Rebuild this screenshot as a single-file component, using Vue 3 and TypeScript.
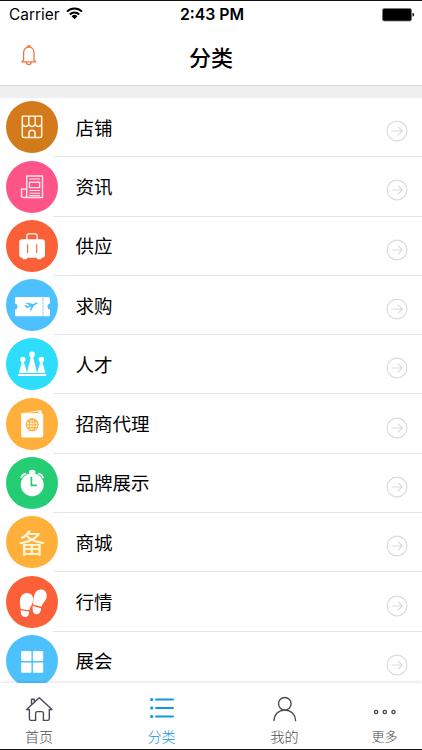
<script setup lang="ts">
interface Category {
  name: string
  icon: string
  color: string
}

const categories: Category[] = [
  { name: '店铺', icon: 'shop', color: '#d37b1a' },
  { name: '资讯', icon: 'news', color: '#ff5487' },
  { name: '供应', icon: 'case', color: '#fb6039' },
  { name: '求购', icon: 'ticket', color: '#4dc1fd' },
  { name: '人才', icon: 'crown', color: '#2edcfc' },
  { name: '招商代理', icon: 'passport', color: '#ffb03b' },
  { name: '品牌展示', icon: 'clock', color: '#24cc74' },
  { name: '商城', icon: 'spare', color: '#ffb03b' },
  { name: '行情', icon: 'feet', color: '#fb6039' },
  { name: '展会', icon: 'grid', color: '#4dc1fd' },
]

const tabs = [
  { name: '首页', icon: 'home', active: false },
  { name: '分类', icon: 'list', active: true },
  { name: '我的', icon: 'user', active: false },
  { name: '更多', icon: 'more', active: false },
]
</script>

<template>
  <div class="screen">
    <div class="status">
      <div class="carrier">
        <span>Carrier</span>
        <svg width="17" height="13" viewBox="0 0 17 13">
          <g fill="none" stroke="#000" stroke-width="2">
            <path d="M1 4.6a10.6 10.6 0 0 1 15 0" />
            <path d="M3.8 7.5a6.7 6.7 0 0 1 9.4 0" />
          </g>
          <path d="M5.6 9.3a4.1 4.1 0 0 1 5.8 0L8.5 12.3z" />
        </svg>
      </div>
      <div class="time">2:43 PM</div>
      <div class="battery">
        <svg width="33" height="14" viewBox="0 0 33 14">
          <rect x=".5" y=".5" width="29" height="12.5" rx="1.8" fill="#000" stroke="#777" stroke-width=".8" />
          <path d="M30.5 4.8q1.6.4 1.6 2t-1.6 2z" />
        </svg>
      </div>
    </div>

    <header class="navbar">
      <svg class="bell" width="16" height="21" viewBox="0 0 16 21" fill="none" stroke="#f4733f" stroke-width="1.3" stroke-linejoin="round">
        <path d="M2.6 15V7.6C2.6 4.4 4.8 2 7.8 2S13 4.4 13 7.6V15l1.7 1.900H.9z" />
        <path d="M6.5 2a1.3 1.3 0 0 1 2.6 0M5.2 17q.4 2.7 2.6 2.7t2.6-2.7" />
      </svg>
      <h1>分类</h1>
    </header>

    <main class="list">
      <div v-for="item in categories" :key="item.name" class="row">
        <div class="badge" :style="{ backgroundColor: item.color }">
          <span v-if="item.icon === 'spare'" class="glyph">备</span>
          <svg v-else width="52" height="52" viewBox="0 0 52 52">
            <g v-if="item.icon === 'shop'" fill="none" stroke="#fff4e4" stroke-width="1.5" stroke-linejoin="round">
              <path d="M16.3 15.3h19.4v8.2q-1.3 1.9-3.3 1.9T29.2 23.5q-1.2 1.9-3.2 1.9t-3.2-1.9q-1.2 1.9-3.2 1.9t-3.3-1.9zM22.8 15.3v8.2M29.2 15.3v8.2" />
              <path d="M16.3 24v10.500q0 2 2 2h15.400q2 0 2-2V24M23 36.5v-4.300a3 3 0 0 1 6 0v4.300" />
            </g>
            <g v-else-if="item.icon === 'news'" fill="none" stroke="#ffe4ec" stroke-width="1.4" stroke-linejoin="round">
              <path d="M20.7 36.5V15H36.5v21.5H17.5q-2 0-2-2V28h5.200M20.7 28v6.500q0 2-2 2" />
              <path d="M23.3 18h10.700M23.3 29.5h10.700M23.3 32.200h10.700M23.3 34.600h10.700" stroke-width="1.1" />
              <rect x="23.4" y="21.2" width="10.2" height="5.4" />
            </g>
            <g v-else-if="item.icon === 'case'">
              <path d="M20.9 20v-4.200q0-2 2-2h6.200q2 0 2 2V20" fill="none" stroke="#fff" stroke-width="1.3" />
              <rect x="13.2" y="19.2" width="25.8" height="18.6" rx="3" fill="#fff" />
              <path d="M16.5 37h4.500v1.200q0 1-1 1h-2.500q-1 0-1-1zM31 37h4.500v1.200q0 1-1 1H32q-1 0-1-1z" fill="#fff" />
              <path d="M21.6 24.200v8.800M30.7 24.200v8.800" stroke="#fb6039" stroke-width="1.1" />
            </g>
            <g v-else-if="item.icon === 'ticket'">
              <path d="M10.5 18h32q1.500 0 1.500 1.500v4.700a3.400 3.400 0 0 0 0 6.600v4.900q0 1.500-1.500 1.500h-32q-1.500 0-1.500-1.500v-4.900a3.400 3.400 0 0 0 0-6.600v-4.700Q9 18 10.500 18z" fill="#fff" />
              <path d="M37 19v18" stroke="#4dc1fd" stroke-width=".9" stroke-dasharray="1.5 .8" />
              <path d="M18.2 26.300l1.200-.4 2.200 1.200 2-.8-4.100-2.100 1.500-.6 6 1.400 2.800-1.300q1.500-.6 2 .1t-1.300 1.500l-2.600 1.200-2.700 5-1.300.5 1.100-4.600-3.500 1.500q-1 .1-1.600-.7z" fill="#4dc1fd" />
            </g>
            <g v-else-if="item.icon === 'crown'" fill="#fff">
              <circle cx="26" cy="16.4" r="2.9" />
              <circle cx="16.8" cy="21.4" r="2.7" />
              <circle cx="35.3" cy="21.4" r="2.7" />
              <path d="M25.1 18h1.800l4.200 17h-10.200zM16 23.500h1.700L21.200 35h-8.300zM34.5 23.500h1.700L39.500 35h-8.300zM12.2 36.100h28v1.800h-28z" />
            </g>
            <g v-else-if="item.icon === 'passport'">
              <path d="M15.6 15.300l18.500-3q1.400-.2 1.400 1.200v2h-18z" fill="#fff" />
              <path d="M19 15l13.500-1.500v1.700H19z" fill="#ffb03b" />
              <path d="M15.2 15.200h20q2 0 2 2v20.300q0 2-2 2H16.700q-1.500 0-1.500-1.500z" fill="#fff" />
              <g fill="none" stroke="#ffae36" stroke-width="1.2">
                <circle cx="26.2" cy="26.7" r="5.9" />
                <ellipse cx="26.2" cy="26.7" rx="2.9" ry="5.9" />
                <path d="M20.3 26.700h11.800M21.3 23.800h9.800M21.3 29.600h9.800M26.2 20.800v11.800" stroke-width=".9" />
              </g>
            </g>
            <g v-else-if="item.icon === 'clock'">
              <circle cx="26.2" cy="27.7" r="11.5" fill="#fff" />
              <path d="M23 14.800q.2-2 3.200-2t3.200 2v1.700H23z" fill="#fff" />
              <path d="M15.3 20.400q.7-2.600 4-3.800M33 16.600q3.300 1.200 4 3.800" fill="none" stroke="#fff" stroke-width="1.7" stroke-linecap="round" />
              <path d="M25.4 19.800v8.600h5.500" fill="none" stroke="#24cc74" stroke-width="1.7" />
            </g>
            <g v-else-if="item.icon === 'feet'" fill="#fff">
              <path d="M14.7 34.300l8.400 1.300q.2 5.600-4.500 5.500-4-.2-3.900-6.800zM14.6 32.900c-.3-3-1-5.200-.6-8.600.5-4.400 3.400-7.500 7.300-7.300 4.400.2 6.300 3.400 5.800 7.500-.5 3.700-2.900 6.200-3.800 9.700z" />
              <path d="M26.7 29.900l8.400 2.300q-.4 6.400-5 6-4.300-.5-3.400-8.300zM26.900 28.500c.5-3.200.3-5.100 1.200-8.400 1-4.200 3.600-7.100 7.500-6.600 4.300.6 5.700 4.100 4.900 8-.8 3.600-3.900 5.600-5.100 9.300z" />
            </g>
            <g v-else fill="#fff">
              <rect x="15.2" y="16" width="10.3" height="10.1" rx="1" />
              <rect x="26.9" y="16" width="10.3" height="10.1" rx="1" />
              <rect x="15.2" y="27.4" width="10.3" height="10.3" rx="1" />
              <rect x="26.9" y="27.4" width="10.3" height="10.3" rx="1" />
            </g>
          </svg>
        </div>
        <div class="cell">
          <span class="label">{{ item.name }}</span>
          <svg class="arrow" width="22" height="22" viewBox="0 0 22 22" fill="none" stroke="#dcdcdc" stroke-width="1.2">
            <circle cx="11" cy="11" r="9.9" />
            <path d="M5.5 11h10.500M11.8 6.600l4.500 4.400-4.500 4.400" />
          </svg>
        </div>
      </div>
    </main>

    <nav class="tabbar">
      <div v-for="tab in tabs" :key="tab.name" class="tab" :class="['tab-' + tab.icon, { active: tab.active }]">
        <svg width="30" height="28" viewBox="0 0 30 28" fill="none" stroke="currentColor" stroke-width="1.4" stroke-linecap="round" stroke-linejoin="round">
          <path v-if="tab.icon === 'home'" d="M2.5 14.500L15.3 2.800 28 14.500h-2.700v9.300q0 1.600-1.600 1.600h-4.300v-7.200q0-1.600-1.600-1.600h-4.600q-1.600 0-1.600 1.600v7.200H7q-1.600 0-1.600-1.600v-9.300zM7.500 9.500V4.300h2.800v2.500" />
          <g v-else-if="tab.icon === 'list'" stroke-width="2">
            <path d="M9 4.500h17M9 13h17M9 21.500h17" />
            <path d="M4.600 4.500h.2M4.600 13h.2M4.600 21.500h.2" stroke-width="3.2" />
          </g>
          <g v-else-if="tab.icon === 'user'">
            <circle cx="14.8" cy="8.8" r="6.3" />
            <path d="M4 25.500c.3-6 4.500-10.400 10.800-10.400S25.300 19.500 25.600 25.500" />
          </g>
          <g v-else>
            <circle cx="6.1" cy="17" r="1.6" />
            <circle cx="14.8" cy="17" r="1.6" />
            <circle cx="23.5" cy="17" r="1.6" />
          </g>
        </svg>
        <span>{{ tab.name }}</span>
      </div>
    </nav>
  </div>
</template>

<style>
body {
  margin: 0;
  overflow: hidden;
}
</style>

<style scoped>
.screen {
  box-sizing: border-box;
  width: 422px;
  height: 750px;
  display: flex;
  flex-direction: column;
  overflow: hidden;
  background: #fff;
  border-top: 1px solid #111;
  border-bottom: 1px solid #111;
  color: #000;
  font-family: "Noto Sans CJK SC", sans-serif;
}
.status {
  flex: none;
  height: 27px;
  display: grid;
  grid-template-columns: 1fr auto 1fr;
  align-items: center;
  padding: 0 7px 0 9px;
  font-family: Inter, sans-serif;
  font-size: 15.4px;
}
.carrier {
  display: flex;
  align-items: center;
  gap: 7px;
}
.carrier svg {
  margin-top: -2px;
}
.time {
  font-size: 15.8px;
  font-weight: 600;
}
.battery {
  display: flex;
  justify-content: flex-end;
}
.navbar {
  flex: none;
  box-sizing: border-box;
  height: 58px;
  display: grid;
  grid-template-columns: 1fr auto 1fr;
  align-items: center;
  padding: 0 21px 2px;
  border-bottom: 1px solid #d6d6d6;
}
h1 {
  margin: 0;
  font-size: 22px;
  line-height: 30px;
  font-weight: 500;
}
.list {
  flex: 1;
  min-height: 0;
  overflow: hidden;
  border-top: 12px solid #f0f0f0;
}
.row {
  height: 59.3px;
  display: flex;
}
.badge {
  flex: none;
  width: 52px;
  height: 52px;
  margin: 3.3px -5px 0 6px;
  border-radius: 50%;
  display: flex;
  align-items: center;
  justify-content: center;
}
.glyph {
  color: #fff7dc;
  font-size: 26.5px;
  line-height: 52px;
}
.cell {
  flex: 1;
  box-sizing: border-box;
  display: flex;
  justify-content: space-between;
  align-items: center;
  padding: 0 14px 0 22.5px;
  border-bottom: 1px solid #e4e4e6;
}
.label {
  margin-bottom: 1px;
  font-size: 18.5px;
  line-height: 28px;
}
.arrow {
  margin-top: 8px;
}
.tabbar {
  flex: none;
  height: 66px;
  display: grid;
  grid-template-columns: 122.5px 123px 100px 30px;
  padding-left: 24px;
  background: #fff;
  box-shadow: 0 -1px 3px rgba(0, 0, 0, 0.12);
  z-index: 1;
}
.tab {
  width: 30px;
  display: flex;
  flex-direction: column;
  align-items: center;
  padding-top: 12px;
  color: #4b4b55;
  font-size: 14px;
  line-height: 20px;
  font-weight: 300;
  white-space: nowrap;
}
.tab svg {
  flex: none;
  margin-bottom: 3px;
}
.tab.active {
  color: #1296e4;
}
.tab-more {
  font-size: 13px;
}
</style>
